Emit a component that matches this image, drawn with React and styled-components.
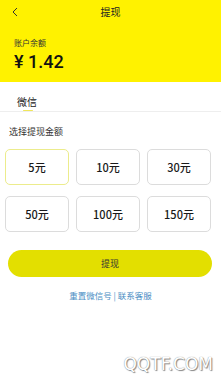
import React, { useState } from "react";
import styled, { createGlobalStyle } from "styled-components";

const Global = createGlobalStyle`
  html, body { margin: 0; padding: 0; background: #fff; }
  body { font-family: "Noto Sans CJK SC", "Noto Sans", sans-serif; color: #222; }
  * { box-sizing: border-box; }
`;

const Page = styled.div`
  width: 221px;
  height: 379px;
  position: relative;
  overflow: hidden;
  background: #fff;
`;

const Header = styled.header`
  background: #fff200;
  height: 82px;
  padding: 0 14px;
  display: flex;
  flex-direction: column;
`;

const NavBar = styled.div`
  height: 24px;
  display: grid;
  grid-template-columns: 20px 1fr 20px;
  align-items: center;
  margin: 0 -6px 0 -6px;
`;

const Back = styled.svg`
  width: 8px;
  height: 10px;
  margin-left: 3px;
`;

const Title = styled.div`
  text-align: center;
  font-size: 10px;
  line-height: 12px;
  color: #222;
`;

const BalanceLabel = styled.div`
  margin-top: 14px;
  font-size: 8px;
  line-height: 10px;
  color: #333;
`;

const Balance = styled.div`
  margin-top: 3px;
  font-family: "Roboto", "Noto Sans", sans-serif;
  font-size: 18px;
  line-height: 22px;
  font-weight: 500;
  color: #111;
`;

const Tabs = styled.div`
  height: 30px;
  border-bottom: 1px solid #eee;
  padding-left: 17px;
  display: flex;
`;

const Tab = styled.div`
  position: relative;
  font-size: 10px;
  line-height: 12px;
  padding-top: 14px;
  color: #222;
  &::after {
    content: "";
    position: absolute;
    left: 6px;
    width: 10px;
    bottom: 0;
    height: 1.5px;
    background: #f0e65a;
    border-radius: 1px;
  }
`;

const Section = styled.div`
  padding: 14px 9px 0;
  font-size: 9px;
  line-height: 11px;
  color: #333;
`;

const Grid = styled.div`
  display: grid;
  grid-template-columns: repeat(3, 64px);
  column-gap: 7px;
  row-gap: 11px;
  padding: 12px 0 0 5px;
`;

const Amount = styled.button`
  height: 36px;
  border-radius: 5px;
  border: 1px solid ${(p) => (p.$active ? "#ecec8c" : "#dcdcdc")};
  background: #fff;
  font-family: "Noto Sans CJK SC", "Noto Sans", sans-serif;
  font-size: 11px;
  font-weight: 500;
  color: #1a1a1a;
  padding: 0;
  cursor: pointer;
`;

const Submit = styled.button`
  display: block;
  margin: 18px 9px 0 8px;
  width: 204px;
  height: 27px;
  border: 0;
  border-radius: 14px;
  background: #e3df00;
  font-family: "Noto Sans CJK SC", "Noto Sans", sans-serif;
  font-size: 9px;
  color: #333;
`;

const Links = styled.div`
  margin-top: 13px;
  text-align: center;
  font-size: 8.5px;
  line-height: 11px;
  color: #4a8ec4;
`;

const Watermark = styled.div`
  position: absolute;
  right: 8px;
  bottom: 5px;
  font-family: "DejaVu Sans", sans-serif;
  font-size: 17px;
  color: #fff;
  text-shadow: 0 0 1px #777, 1px 1px 1px #888;
`;

const amounts = ["5元", "10元", "30元", "50元", "100元", "150元"];

export default function App() {
  const [sel, setSel] = useState(0);
  return (
    <Page>
      <Global />
      <Header>
        <NavBar>
          <Back viewBox="0 0 8 10">
            <path d="M6 1 L2 5 L6 9" fill="none" stroke="#333" strokeWidth="1" />
          </Back>
          <Title>提现</Title>
          <span />
        </NavBar>
        <BalanceLabel>账户余额</BalanceLabel>
        <Balance>¥ 1.42</Balance>
      </Header>
      <Tabs>
        <Tab>微信</Tab>
      </Tabs>
      <Section>选择提现金额</Section>
      <Grid>
        {amounts.map((a, i) => (
          <Amount key={a} $active={i === sel} onClick={() => setSel(i)}>
            {a}
          </Amount>
        ))}
      </Grid>
      <Submit>提现</Submit>
      <Links>重置微信号 | 联系客服</Links>
      <Watermark>QQTF.COM</Watermark>
    </Page>
  );
}
